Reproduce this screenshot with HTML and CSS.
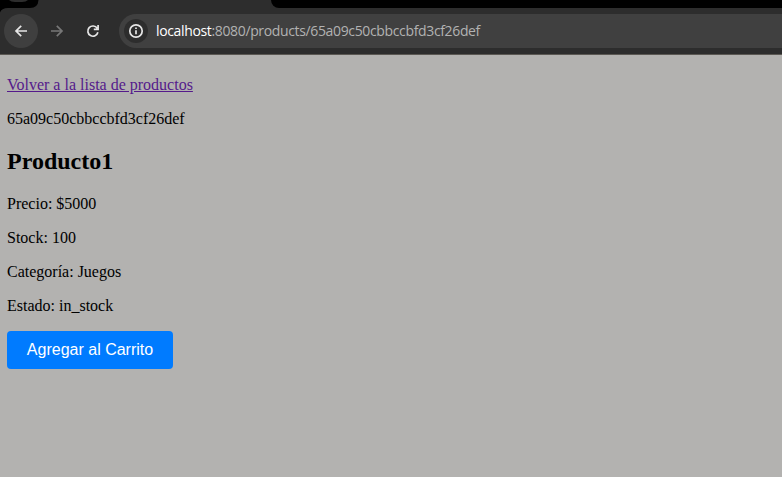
FILE: index.html
```html
<!DOCTYPE html>
<html lang="es">
<head>
<meta charset="utf-8">
<title>Producto1</title>
<link rel="stylesheet" href="styles.css">
</head>
<body>
<header class="browser">
  <div class="tabstrip"><div class="tabs-left"><svg width="40" height="13" viewBox="0 0 40 13"><path class="edge" d="M0 0H38.5Q38 8 30 8H8Q1.5 8 0 12.5Z"/><path class="tabicon" d="M9 0Q11 2 15 2H22Q26 2 28 0Z"/></svg></div><div class="tabs-right"></div></div>
  <div class="toolbar">
    <span class="round back"><svg width="16" height="16" viewBox="0 0 16 16"><path d="M14 8H3M8.2 2.8L3 8L8.2 13.2"/></svg></span>
    <span class="round forward"><svg width="16" height="16" viewBox="0 0 16 16"><path d="M2 8H13M7.8 2.8L13 8L7.8 13.2"/></svg></span>
    <span class="round reload"><svg width="16" height="16" viewBox="0 0 16 16"><path d="M12.2 5.3A5.1 5.1 0 1 0 12.9 9.3M13.1 2V6.3H8.8"/></svg></span>
    <div class="address"><span class="info"><svg width="16" height="16" viewBox="0 0 16 16"><circle cx="8" cy="8" r="6.2"/><path d="M8 7.2V11.3M8 4.6V6"/></svg></span><span class="url"><b>localhost</b>:8080/products/65a09c50cbbccbfd3cf26def</span></div>
  </div>
</header>
<main>
  <a href="#">Volver a la lista de productos</a>
  <p>65a09c50cbbccbfd3cf26def</p>
  <h2>Producto1</h2>
  <p>Precio: $5000</p>
  <p>Stock: 100</p>
  <p>Categoría: Juegos</p>
  <p>Estado: in_stock</p>
  <button type="button">Agregar al Carrito</button>
</main>
</body>
</html>
```

FILE: styles.css
```css
* { box-sizing: border-box; }
body { margin: 0; height: 477px; overflow: hidden; background: #b3b2b0; font: 16px/18px "Liberation Serif", serif; color: #000; }
.browser { height: 55px; background: #2d2d2d; border-bottom: 1px solid #5b5853; }
.tabstrip { height: 8px; display: flex; justify-content: space-between; }
.tabs-left { height: 8px; }
.tabs-left svg { display: block; }
.edge { fill: #000; }
.tabicon { fill: #2d2d2d; }
.tabs-right { width: 511px; background: #000; border-bottom-left-radius: 8px; }
.toolbar { height: 46px; display: flex; align-items: center; padding-left: 4px; }
.round { width: 34px; height: 34px; margin-right: 2px; border-radius: 50%; display: flex; align-items: center; justify-content: center; }
.back { background: #3f3f3f; }
.toolbar svg { fill: none; stroke: #e6e6e6; stroke-width: 1.7; }
.toolbar .forward svg { stroke: #777; }
.address { margin-left: 7px; flex: 1; height: 34px; border-radius: 17px 0 0 17px; background: #404040; display: flex; align-items: center; padding-left: 5px; }
.info { width: 24px; height: 24px; border-radius: 50%; background: #2d2d2d; display: flex; align-items: center; justify-content: center; }
.url { margin-left: 8px; font: 14px/20px "Open Sans", sans-serif; letter-spacing: -0.355px; color: #b2b2b2; white-space: nowrap; }
.url b { font-weight: 400; color: #fff; }
main { padding: 21px 7px 0; }
a { color: #551a8b; display: block; }
p { margin: 16px 0; }
h2 { margin: 20px 0; font-size: 24px; line-height: 27px; }
button { width: 166px; height: 38px; border: 0; border-radius: 4px; background: #007bff; color: #fff; font: 16px "Liberation Sans", sans-serif; padding: 0; display: block; }
```
